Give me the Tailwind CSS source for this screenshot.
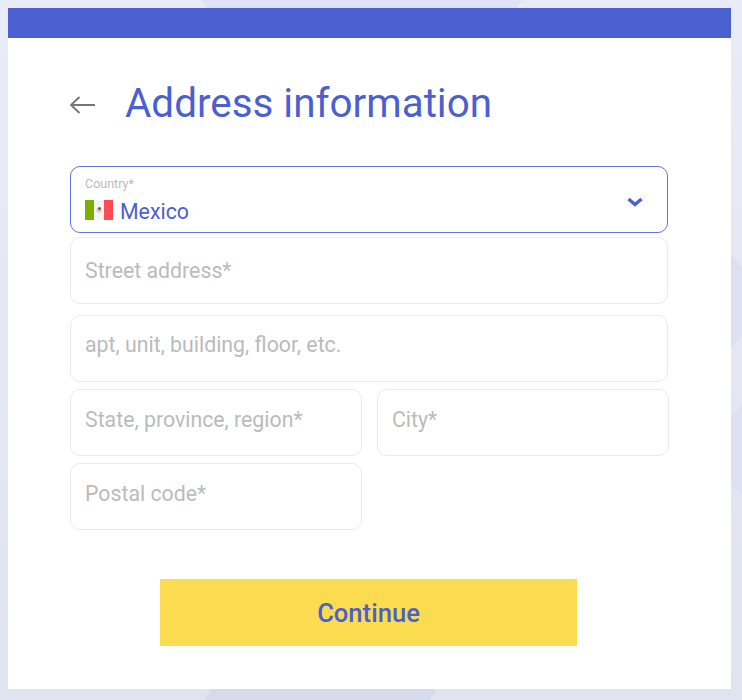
<!DOCTYPE html>
<html lang="en">
<head>
    <meta charset="UTF-8">
    <meta name="viewport" content="width=device-width, initial-scale=1.0">
    <title>Address information</title>
    <script src="https://cdn.jsdelivr.net/npm/@tailwindcss/browser@4"></script>
</head>
<body class="relative h-[700px] w-[742px] overflow-hidden bg-gradient-to-b from-[#e9ebf7] to-[#e0e3f0] font-['Roboto',sans-serif]">

    <!-- Background shapes peeking out round the card -->
    <div class="absolute left-[202px] top-0 h-[10px] w-[320px] bg-[#dfe2f2] [clip-path:polygon(0_0,100%_0,98%_100%,2%_100%)]"></div>
    <div class="absolute left-[205px] top-[688px] h-[12px] w-[232px] bg-[#d6daea] [clip-path:polygon(3%_0,100%_0,97%_100%,0_100%)]"></div>
    <div class="absolute left-[730px] top-[253px] h-[96px] w-[12px] bg-[#dde0f0] [clip-path:polygon(0_0,100%_14%,100%_86%,0_100%)]"></div>
    <div class="absolute left-[730px] top-[405px] h-[90px] w-[12px] bg-[#dde0f0] [clip-path:polygon(0_12%,100%_0,100%_100%,0_88%)]"></div>

    <!-- Card -->
    <div class="absolute left-[8px] top-[8px] h-[681px] w-[723px] bg-white">
        <div class="h-[30px] bg-[#4c5fd0]"></div>

        <div class="pl-[62px]">
            <!-- Header -->
            <div class="mt-[30px] flex h-[70px] items-center">
                <svg class="h-[20px] w-[28px] -translate-x-[1px] translate-y-[2px] text-[#757575]" viewBox="0 0 28 20" fill="none" stroke="currentColor" stroke-width="1.8">
                    <path d="M26 10H2M10.5 2L2 10l8.5 8"/>
                </svg>
                <h1 class="ml-[27px] translate-y-[1px] text-[40.4px] leading-[48px] text-[#4c5fd0]">Address information</h1>
            </div>

            <!-- Form -->
            <div class="mt-[28px] w-[599px]">
                <div class="relative h-[67px] w-[598px] rounded-[10px] border border-[#6374d8] px-[14px] pt-[10px]">
                    <div class="text-[12.5px] leading-[14px] text-[#bbbbbb]">Country*</div>
                    <div class="mt-[6px] flex items-center">
                        <svg class="h-[20px] w-[28px]" viewBox="0 0 28 20">
                            <rect width="9" height="20" fill="#7cb000"/>
                            <rect x="9" width="10" height="20" fill="#f5f5f5"/>
                            <rect x="19" width="9" height="20" fill="#ff4b55"/>
                            <circle cx="14" cy="10" r="2.6" fill="#c9d6b0"/>
                            <circle cx="14.5" cy="8.6" r="1.5" fill="#8a4a55"/>
                        </svg>
                        <span class="ml-[7px] translate-y-[1px] pt-[2px] text-[21.3px] leading-[24px] text-[#4c5fd0]">Mexico</span>
                    </div>
                    <svg class="absolute right-[24px] top-[30px] h-[10px] w-[16px] text-[#4c5fd0]" viewBox="0 0 16 10" fill="none" stroke="currentColor" stroke-width="3.4">
                        <path d="M1.5 2L8 7.5 14.5 2"/>
                    </svg>
                </div>

                <div class="mt-[4px] h-[67px] w-[598px] rounded-[10px] border border-[#ebebeb] px-[14px] pt-[21px] text-[21.3px] leading-[24px] text-[#bbbbbb]">Street address*</div>
                <div class="mt-[11px] h-[67px] w-[598px] rounded-[10px] border border-[#ebebeb] px-[14px] pt-[17px] text-[21.3px] leading-[24px] text-[#bbbbbb]">apt, unit, building, floor, etc.</div>

                <div class="mt-[7px] grid grid-cols-[292px_292px] gap-x-[15px] gap-y-[7px]">
                    <div class="h-[67px] rounded-[10px] border border-[#ebebeb] px-[14px] pt-[18px] text-[21.3px] leading-[24px] text-[#bbbbbb]">State, province, region*</div>
                    <div class="h-[67px] rounded-[10px] border border-[#ebebeb] px-[14px] pt-[18px] text-[21.3px] leading-[24px] text-[#bbbbbb]">City*</div>
                    <div class="h-[67px] rounded-[10px] border border-[#ebebeb] px-[14px] pt-[18px] text-[21.3px] leading-[24px] text-[#bbbbbb]">Postal code*</div>
                </div>
            </div>
        </div>

        <!-- Continue -->
        <button class="ml-[152px] mt-[49px] block h-[67px] w-[417px] bg-[#fbdb4f] pt-[2px] text-[25.6px] font-medium text-[#4c5fd0]">Continue</button>
    </div>
</body>
</html>
